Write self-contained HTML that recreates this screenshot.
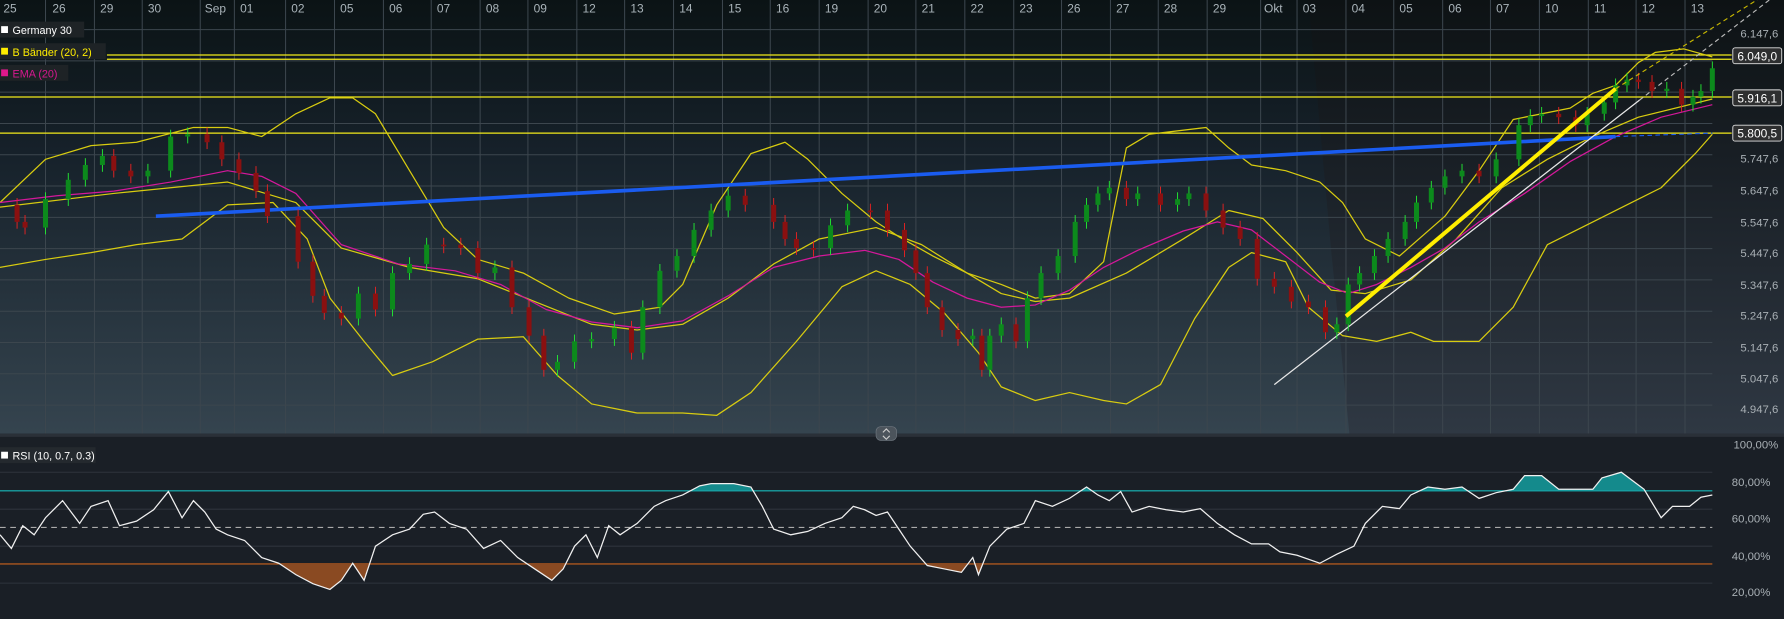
<!DOCTYPE html>
<html><head><meta charset="utf-8"><style>
html,body{margin:0;padding:0;background:#1a1f26;overflow:hidden}
svg{display:block}
text{font-family:"Liberation Sans",sans-serif}
</style></head><body>
<svg id="s" width="1784" height="619" viewBox="0 0 1568 544" preserveAspectRatio="none" xmlns="http://www.w3.org/2000/svg">
<defs>
<linearGradient id="bg" x1="0" y1="0" x2="0" y2="1">
<stop offset="0" stop-color="#0b1315"/><stop offset="0.35" stop-color="#16212a"/><stop offset="1" stop-color="#35444f"/></linearGradient>
<linearGradient id="bg2" x1="0" y1="0" x2="0" y2="1">
<stop offset="0" stop-color="#0d1214"/><stop offset="0.35" stop-color="#181e24"/><stop offset="1" stop-color="#2f3843"/></linearGradient>
<clipPath id="above"><rect x="0" y="380" width="1568" height="51.3"/></clipPath>
<clipPath id="below"><rect x="0" y="495.6" width="1568" height="50"/></clipPath>
</defs>
<rect x="0" y="0" width="1568" height="381" fill="url(#bg)"/>
<polygon points="1150,0 1568,0 1568,381 1186,381 1170,220" fill="url(#bg2)"/>
<rect x="0" y="381" width="1568" height="3" fill="#2a3038"/>
<rect x="0" y="384" width="1568" height="160" fill="#1a1f26"/>
<g stroke="#3c464e" stroke-width="0.9">
<path d="M40 0V381M83 0V381M125 0V381M176 0V381M206 0V381M251 0V381M294 0V381M337 0V381M379 0V381M422 0V381M464 0V381M507 0V381M549 0V381M592 0V381M635 0V381M677 0V381M720 0V381M763 0V381M805 0V381M848 0V381M891 0V381M933 0V381M976 0V381M1018 0V381M1061 0V381M1108 0V381M1140 0V381M1183 0V381M1225 0V381M1268 0V381M1310 0V381M1353 0V381M1396 0V381M1438 0V381M1481 0V381"/>
<path d="M0 26H1505M0 53.5H1505M0 81H1505M0 108.5H1505M0 136H1505M0 163.5H1505M0 191H1505M0 218.5H1505M0 246H1505M0 273.5H1505M0 301H1505M0 328.5H1505M0 356H1505"/>
<path d="M0 415H1505M0 447.5H1505M0 480H1505M0 512.5H1505" stroke="#2e343c"/>
</g>
<g fill="#aab4ba" font-size="10.5">
<text x="3" y="11">25</text><text x="46" y="11">26</text><text x="88" y="11">29</text><text x="130" y="11">30</text><text x="180" y="11">Sep</text><text x="211" y="11">01</text><text x="256" y="11">02</text><text x="299" y="11">05</text><text x="342" y="11">06</text><text x="384" y="11">07</text><text x="427" y="11">08</text><text x="469" y="11">09</text><text x="512" y="11">12</text><text x="554" y="11">13</text><text x="597" y="11">14</text><text x="640" y="11">15</text><text x="682" y="11">16</text><text x="725" y="11">19</text><text x="768" y="11">20</text><text x="810" y="11">21</text><text x="853" y="11">22</text><text x="896" y="11">23</text><text x="938" y="11">26</text><text x="981" y="11">27</text><text x="1023" y="11">28</text><text x="1066" y="11">29</text><text x="1111" y="11">Okt</text><text x="1145" y="11">03</text><text x="1188" y="11">04</text><text x="1230" y="11">05</text><text x="1273" y="11">06</text><text x="1315" y="11">07</text><text x="1358" y="11">10</text><text x="1401" y="11">11</text><text x="1443" y="11">12</text><text x="1486" y="11">13</text>
</g>
<g fill="#a9b0b5" font-size="10" text-anchor="end">
<text x="1563" y="33">6.147,6</text><text x="1563" y="143">5.747,6</text><text x="1563" y="171">5.647,6</text><text x="1563" y="199">5.547,6</text><text x="1563" y="226">5.447,6</text><text x="1563" y="254">5.347,6</text><text x="1563" y="281">5.247,6</text><text x="1563" y="309">5.147,6</text><text x="1563" y="336">5.047,6</text><text x="1563" y="363">4.947,6</text>
<text x="1563" y="394">100,00%</text><text x="1556" y="427">80,00%</text><text x="1556" y="459">60,00%</text><text x="1556" y="492">40,00%</text><text x="1556" y="524">20,00%</text>
</g>
<g stroke="#f2ea1a" stroke-width="1.1">
<path d="M94 48.3H1522M94 52.1H1522M0 85.3H1522M0 117H1522"/>
</g>
<g fill="none" stroke-width="1.1" stroke-linejoin="round">
<polyline stroke="#d8cc10" points="0,178 40,140 80,128 120,125 170,112 200,112 230,120 260,100 290,86 310,86 330,100 360,150 390,200 420,228 460,240 500,262 540,276 580,270 600,250 630,180 660,135 690,125 710,140 740,170 770,195 790,208 820,225 850,240 880,250 910,262 940,258 970,230 990,130 1010,118 1060,112 1080,130 1100,145 1130,150 1160,160 1180,178 1200,210 1230,225 1270,190 1300,150 1330,105 1380,95 1400,82 1420,75 1440,55 1455,46 1480,43 1505,50"/>
<polyline stroke="#d8cc10" points="0,235 40,228 80,222 120,215 160,210 200,180 240,178 270,210 290,262 320,300 345,330 380,318 420,298 460,296 490,330 520,355 560,363 600,363 630,365 660,345 700,300 740,252 770,238 800,250 830,275 860,310 880,340 910,352 940,345 970,352 990,355 1020,338 1050,280 1080,235 1100,222 1130,230 1150,270 1180,295 1210,300 1240,292 1260,300 1300,300 1330,270 1360,215 1400,195 1430,180 1460,165 1490,135 1505,118"/>
<polyline stroke="#d8cc10" points="0,182 100,170 200,160 260,178 300,218 360,235 420,245 470,265 520,285 560,290 600,285 640,262 680,232 720,210 770,200 810,215 850,240 880,258 910,265 940,262 990,240 1040,210 1080,185 1110,192 1140,222 1170,255 1200,258 1240,246 1280,210 1320,165 1360,140 1400,120 1440,103 1505,87"/>
<polyline stroke="#d4189a" points="0,178 50,172 100,168 150,160 200,150 230,155 260,170 300,215 350,232 400,238 440,250 480,272 520,283 560,288 600,282 640,260 680,235 720,225 760,220 790,228 820,248 850,262 880,270 910,268 940,255 970,235 1000,220 1040,203 1070,195 1100,202 1130,225 1160,248 1185,258 1210,250 1240,235 1270,218 1300,195 1340,170 1380,142 1420,120 1460,103 1505,92"/>
</g>
<line x1="137" y1="190" x2="1420" y2="120" stroke="#1a5cf0" stroke-width="3.2"/>
<line x1="1420" y1="120" x2="1505" y2="117" stroke="#1a5cf0" stroke-width="1" stroke-dasharray="4,3"/>
<line x1="1120" y1="338" x2="1441" y2="88" stroke="#e8e8e8" stroke-width="1.1"/>
<line x1="1441" y1="88" x2="1568" y2="-10" stroke="#bbbbbb" stroke-width="1" stroke-dasharray="4,3"/>
<g id="candles"></g>
<line x1="1183" y1="278" x2="1420" y2="78" stroke="#ffee00" stroke-width="3.5"/>
<line x1="1420" y1="78" x2="1568" y2="-15" stroke="#c8b800" stroke-width="1" stroke-dasharray="4,3"/>
<g font-size="10.5" fill="#fff">
<rect x="1523" y="42" width="43" height="14" rx="2" fill="#2e2f30" stroke="#e0e0e0" stroke-width="0.8"/><text x="1527" y="53">6.049,0</text>
<rect x="1523" y="79" width="43" height="14" rx="2" fill="#2e2f30" stroke="#e0e0e0" stroke-width="0.8"/><text x="1527" y="90">5.916,1</text>
<rect x="1523" y="110" width="43" height="14" rx="2" fill="#2e2f30" stroke="#e0e0e0" stroke-width="0.8"/><text x="1527" y="121">5.800,5</text>
</g>
<g font-size="9.5">
<rect x="0" y="19" width="74" height="14" fill="#1e2326"/><rect x="1" y="23" width="6" height="6" fill="#fff"/><text x="11" y="30" fill="#fff">Germany 30</text>
<rect x="0" y="38" width="93" height="14" fill="#1e2326"/><rect x="1" y="42" width="6" height="6" fill="#ffee00"/><text x="11" y="49" fill="#ffee00">B Bänder (20, 2)</text>
<rect x="0" y="57" width="60" height="14" fill="#1e2326"/><rect x="1" y="61" width="6" height="6" fill="#e0188c"/><text x="11" y="68" fill="#d81890">EMA (20)</text>
<rect x="0" y="393" width="84" height="14" fill="#24292e"/><rect x="1" y="397" width="6" height="6" fill="#fff"/><text x="11" y="404" fill="#fff">RSI (10, 0.7, 0.3)</text>
</g>
<rect x="770" y="375" width="18" height="12" rx="4" fill="#4c545c" stroke="#707880" stroke-width="0.6"/>
<path d="M776 380l3-3 3 3M776 383l3 3 3-3" stroke="#ccc" fill="none" stroke-width="1"/>
<line x1="0" y1="431.3" x2="1505" y2="431.3" stroke="#18c0c0" stroke-width="1"/>
<line x1="0" y1="463.5" x2="1505" y2="463.5" stroke="#aaa" stroke-width="1" stroke-dasharray="5,4"/>
<line x1="0" y1="495.6" x2="1505" y2="495.6" stroke="#d2651c" stroke-width="1"/>
<g id="rsi"></g>
</svg>
<script>
(function(){
var R=[[0,470],[10,482],[20,462],[30,470],[40,455],[55,440],[70,460],[80,445],[95,440],[105,462],[120,458],[135,448],[148,432],[160,455],[170,440],[180,450],[190,465],[200,470],[215,475],[230,490],[245,495],[260,505],[275,513],[290,518],[300,510],[310,495],[320,510],[330,480],[345,470],[360,465],[372,452],[382,450],[395,460],[410,465],[425,482],[440,475],[455,490],[470,500],[485,510],[495,500],[505,480],[515,470],[525,490],[535,462],[545,470],[560,460],[575,445],[585,440],[600,435],[615,427],[625,425],[645,425],[660,428],[670,445],[680,465],[695,470],[710,467],[725,460],[740,455],[750,445],[760,448],[770,453],[780,450],[790,465],[800,480],[815,497],[830,500],[845,503],[855,490],[860,505],[870,480],[885,465],[900,460],[910,440],[925,445],[940,438],[955,428],[965,435],[975,440],[985,432],[995,450],[1010,445],[1025,448],[1040,450],[1055,447],[1070,460],[1085,470],[1100,478],[1115,478],[1125,485],[1140,488],[1160,495],[1175,487],[1190,480],[1200,460],[1215,445],[1230,447],[1240,435],[1255,428],[1270,430],[1285,428],[1300,438],[1315,433],[1330,430],[1340,418],[1355,418],[1370,430],[1385,430],[1400,430],[1408,420],[1425,415],[1445,430],[1460,455],[1470,445],[1485,445],[1495,437],[1505,435]];
var NS="http://www.w3.org/2000/svg";
function el(t,a,p){var e=document.createElementNS(NS,t);for(var k in a)e.setAttribute(k,a[k]);p.appendChild(e);return e;}
var rg=document.getElementById('rsi');
var pts=R.map(function(p){return p.join(',')}).join(' ');
el('polygon',{points:'0,431.3 '+pts+' 1505,431.3',fill:'#148a8c','clip-path':'url(#above)'},rg);
el('polygon',{points:'0,495.6 '+pts+' 1505,495.6',fill:'#8a4a22','clip-path':'url(#below)'},rg);
el('polyline',{points:pts,fill:'none',stroke:'#f0f0f0','stroke-width':1.1},rg);
var P=[[5,180],[15,195],[22,200],[40,175],[60,158],[75,145],[90,137],[100,150],[115,155],[130,150],[150,120],[165,118],[182,125],[195,140],[210,152],[225,168],[235,190],[262,230],[275,260],[285,275],[300,280],[315,258],[330,272],[345,240],[360,232],[375,215],[390,215],[405,218],[420,240],[435,235],[450,270],[465,295],[478,325],[490,318],[505,300],[520,298],[540,288],[555,310],[565,270],[580,238],[595,225],[610,202],[625,185],[640,172],[655,180],[680,195],[690,210],[700,218],[715,218],[730,198],[745,185],[765,185],[780,202],[795,220],[805,240],[815,270],[828,290],[842,298],[855,295],[863,325],[870,295],[880,285],[893,300],[903,262],[915,240],[930,225],[945,195],[955,180],[965,170],[975,165],[990,175],[1000,170],[1020,180],[1035,175],[1045,170],[1060,185],[1075,200],[1090,210],[1105,245],[1120,252],[1135,265],[1150,270],[1165,292],[1175,285],[1185,250],[1195,240],[1208,225],[1220,210],[1235,195],[1245,178],[1258,165],[1270,155],[1285,150],[1300,155],[1315,140],[1335,110],[1345,102],[1355,100],[1370,103],[1385,110],[1395,100],[1410,90],[1420,75],[1430,70],[1440,72],[1452,80],[1465,78],[1478,92],[1488,85],[1495,80],[1505,60]];
var cg=document.getElementById('candles');
for(var i=1;i<P.length;i++){var o=P[i-1][1],c=P[i][1],x=P[i][0];var up=c<o;
var t0=Math.min(o,c),b0=Math.max(o,c);if(b0-t0<1.5){b0=t0+1.5;}
el('line',{x1:x,y1:t0-6,x2:x,y2:b0+6,stroke:up?'#22ee33':'#ee2222','stroke-width':0.8},cg);
el('rect',{x:x-2.2,y:t0,width:4.4,height:b0-t0,fill:up?'#0c8a1c':'#8a1010'},cg);}
})();
</script>
</body></html>
